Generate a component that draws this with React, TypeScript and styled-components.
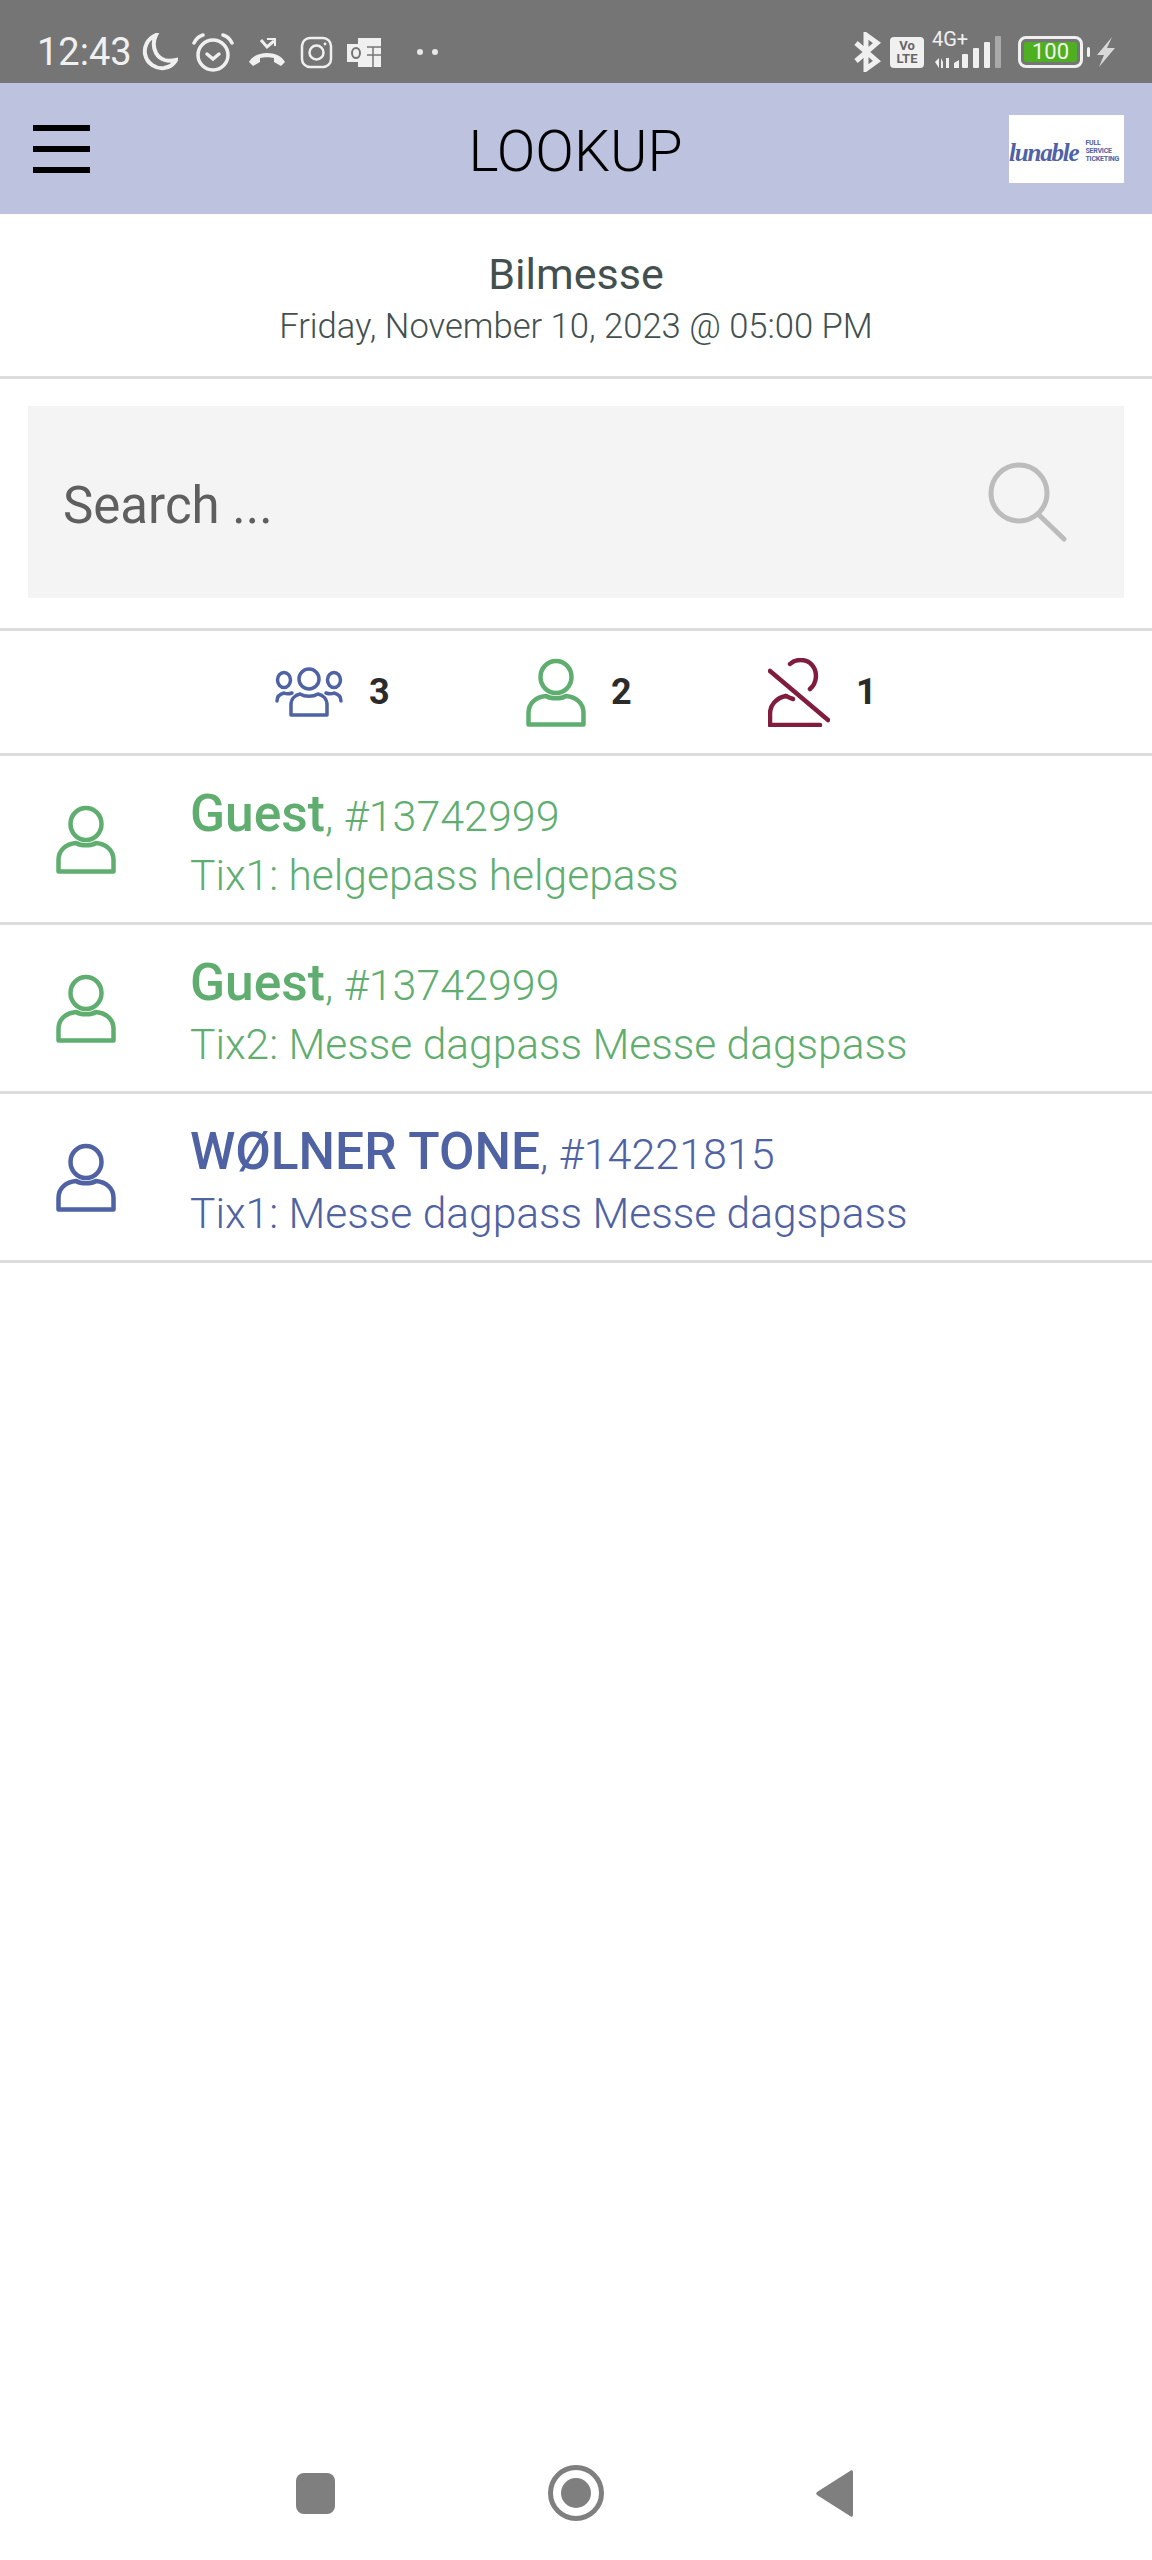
import React from 'react';
import styled, { createGlobalStyle } from 'styled-components';

const green = '#5fae70';
const blue = '#4f62a3';
const wine = '#801c3c';
const line = '#dcdcdc';

const GlobalStyle = createGlobalStyle`
  html, body {
    margin: 0;
    padding: 0;
    background: #fff;
    font-family: Roboto, "Liberation Sans", sans-serif;
  }
`

const Page = styled.div`
  width: 1152px;
  min-height: 2560px;
  display: flex;
  flex-direction: column;
  background: #fff;
`

const StatusBar = styled.div`
  height: 83px;
  box-sizing: border-box;
  padding: 32px 36px 11px 37px;
  background: #757575;
  display: flex;
  justify-content: space-between;
  align-items: center;
  color: #f0f0f0;
`

const StatusGroup = styled.div<{ $gap: number }>`
  display: flex;
  align-items: center;
  gap: ${ ({ $gap }) => $gap }px;
`

const Clock = styled.span`
  font-size: 38px;
  line-height: 40px;
  margin-right: -1px;
`

const Dots = styled.span`
  display: flex;
  gap: 9px;
  margin-left: 22px;

  i {
    width: 6px;
    height: 6px;
    border-radius: 50%;
    background: #e8e8e8;
  }
`

const VoLte = styled.span`
  width: 34px;
  height: 31px;
  border-radius: 4px;
  background: #f0f0f0;
  color: #666;
  font-size: 13px;
  font-weight: 700;
  line-height: 13px;
  display: flex;
  flex-direction: column;
  align-items: center;
  justify-content: center;
`

const Network = styled.div`
  width: 70px;
  height: 36px;
  position: relative;
`

const NetworkLabel = styled.span`
  position: absolute;
  left: -1px;
  top: -5px;
  font-size: 20px;
  line-height: 20px;
`

const Battery = styled.div`
  width: 65px;
  height: 32px;
  box-sizing: border-box;
  border: 3px solid #f0f0f0;
  border-radius: 8px;
  padding: 3px;
  position: relative;
  margin-left: 6px;

  &::after {
    content: '';
    position: absolute;
    right: -10px;
    top: 8px;
    width: 3px;
    height: 10px;
    border-radius: 2px;
    background: #f0f0f0;
  }
`

const BatteryFill = styled.div`
  height: 100%;
  border-radius: 2px;
  background: #4faf22;
  color: #f3f3f3;
  font-size: 22px;
  line-height: 20px;
  text-align: center;
`

const Header = styled.header`
  height: 131px;
  box-sizing: border-box;
  padding: 0 28px 0 33px;
  background: #bdc3de;
  display: flex;
  align-items: center;
  justify-content: space-between;
`

const MenuButton = styled.div`
  width: 57px;
  display: flex;
  flex-direction: column;
  gap: 15px;

  span {
    height: 6px;
    background: #000;
  }
`

const Title = styled.h1`
  margin: 6px 0 0 52px;
  font-size: 57px;
  font-weight: 300;
  color: #000;
  line-height: 64px;
`

const Logo = styled.div`
  width: 115px;
  height: 68px;
  background: #fff;
  display: flex;
  align-items: center;
  gap: 7px;
  overflow: hidden;
  color: ${ blue };
`

const LogoName = styled.span`
  font-family: "Liberation Serif", serif;
  font-style: italic;
  font-weight: 700;
  font-size: 25px;
  line-height: 30px;
  letter-spacing: -1.2px;
  margin-top: 8px;
  flex-shrink: 0;
`

const LogoTag = styled.span`
  font-size: 7px;
  font-weight: 700;
  line-height: 8px;
  margin-top: 4px;
  letter-spacing: -0.2px;
  flex-shrink: 0;
`

const EventInfo = styled.section`
  height: 165px;
  box-sizing: border-box;
  padding-top: 37px;
  border-bottom: 3px solid ${ line };
  text-align: center;
  color: #43504f;
`

const EventName = styled.div`
  font-size: 43px;
  line-height: 46px;
`

const EventDate = styled.div`
  margin-top: 9px;
  font-size: 34.6px;
  font-weight: 300;
  line-height: 40px;
`

const SearchSection = styled.section`
  padding: 27px 28px 30px;
  border-bottom: 3px solid ${ line };
`

const SearchBox = styled.div`
  height: 192px;
  box-sizing: border-box;
  padding: 0 56px 0 35px;
  background: #f4f4f4;
  display: flex;
  align-items: center;
  justify-content: space-between;
`

const Placeholder = styled.span`
  margin-top: 6px;
  font-size: 51px;
  color: #5f5f5f;
`

const Stats = styled.section`
  height: 125px;
  box-sizing: border-box;
  padding-left: 275px;
  border-bottom: 3px solid ${ line };
  display: flex;
  align-items: center;
`

const Stat = styled.div<{ $width: number }>`
  width: ${ ({ $width }) => $width }px;
  display: flex;
  align-items: center;
`

const StatCount = styled.span<{ $gap: number }>`
  margin-left: ${ ({ $gap }) => $gap }px;
  font-size: 36px;
  font-weight: 700;
  color: #2b2b2b;
`

const Row = styled.div<{ $color: string }>`
  height: 169px;
  box-sizing: border-box;
  padding-left: 56px;
  border-bottom: 3px solid ${ line };
  display: flex;
  align-items: center;
  color: ${ ({ $color }) => $color };
`

const RowText = styled.div`
  margin-left: 74px;
  margin-top: 6px;
`

const RowTitle = styled.div`
  font-size: 43px;
  font-weight: 300;
  line-height: 60px;
`

const RowName = styled.span`
  font-size: 51.5px;
  font-weight: 500;
`

const RowTicket = styled.div`
  font-size: 42.5px;
  font-weight: 300;
  line-height: 50px;
  margin-top: 5px;
`

const NavBar = styled.nav`
  margin-top: auto;
  margin-bottom: 39px;
  padding-left: 296px;
  display: flex;
  align-items: center;
`

const NavSquare = styled.div`
  width: 39px;
  height: 41px;
  border-radius: 8px;
  background: #7f7f7f;
`

const NavCircle = styled.div`
  width: 56px;
  height: 56px;
  box-sizing: border-box;
  margin-left: 213px;
  border: 5px solid #7f7f7f;
  border-radius: 50%;
  display: flex;
  align-items: center;
  justify-content: center;

  &::after {
    content: '';
    width: 30px;
    height: 30px;
    border-radius: 50%;
    background: #7f7f7f;
  }
`

const NavBack = styled.svg`
  margin-left: 212px;
`

function PersonIcon ({ color, width, height }: { color: string, width: number, height: number }) {
  return (
    <svg width={ width } height={ height } viewBox="0 0 60 69" fill="none" stroke={ color } strokeWidth="4.5" strokeLinejoin="round">
      <ellipse cx="30" cy="19" rx="15.5" ry="16" />
      <path d="M2.5 66.5V55C2.5 45 10 39 20 38C25 41 35 41 40 38C50 39 57.5 45 57.5 55V66.5Z" />
    </svg>
  )
}

function NoPersonIcon () {
  return (
    <svg width="62" height="69" viewBox="0 0 62 69" fill="none" stroke={ wine } strokeWidth="4.5" strokeLinejoin="round" strokeLinecap="round">
      <path d="M22 6C27 1 38 0 44 7C50 14 49 25 42 31" />
      <path d="M18 38C8 40 2 47 2 56V67H52" />
      <path d="M18 38C20 39 22 40 25 41" />
      <path d="M2 13L60 62" />
    </svg>
  )
}

function GroupIcon () {
  return (
    <svg width="68" height="50" viewBox="0 0 68 50" fill="none" stroke={ blue } strokeWidth="3.5" strokeLinejoin="round" strokeLinecap="round">
      <ellipse cx="34" cy="12" rx="10" ry="10" />
      <ellipse cx="9" cy="13" rx="6.5" ry="7.5" />
      <ellipse cx="59" cy="13" rx="6.5" ry="7.5" />
      <path d="M16 48V38C16 32 20 28 25 27C30 30 38 30 43 27C48 28 52 32 52 38V48Z" />
      <path d="M2 34C2 30 5 27 9 26C11 27 14 27 17 26" />
      <path d="M66 34C66 30 63 27 59 26C57 27 54 27 51 26" />
    </svg>
  )
}

function SearchIcon () {
  return (
    <svg width="80" height="80" viewBox="0 0 80 80" fill="none" stroke="#bcbcbc" strokeWidth="5" strokeLinecap="round">
      <circle cx="31" cy="31" r="28" />
      <path d="M50 52L76 77" />
    </svg>
  )
}

function StatusIcons () {
  return (
    <StatusGroup $gap={ 14 }>
      <svg width="36" height="38" viewBox="0 0 36 38" fill="none" stroke="#f0f0f0" strokeWidth="4">
        <path d="M14 2C5 6 2 14 3 21C5 31 14 36 22 35C28 34 32 31 34 27C26 29 18 27 14 20C11 14 11 8 14 2Z" />
      </svg>
      <svg width="42" height="39" viewBox="0 0 42 39" fill="none" stroke="#f0f0f0" strokeWidth="3.5" strokeLinecap="round">
        <circle cx="21" cy="22" r="15" />
        <path d="M15 21L21 26L27 21" />
        <path d="M2 10C4 6 7 3 11 2" />
        <path d="M40 10C38 6 35 3 31 2" />
      </svg>
      <svg width="38" height="29" viewBox="0 0 38 29" fill="#f0f0f0">
        <path d="M1 24C7 12 31 12 37 24L33 28L26 24V20C22 19 16 19 12 20V24L5 28Z" />
        <path d="M13 2L19 9L26 3" fill="none" stroke="#f0f0f0" strokeWidth="3" />
        <path d="M19 1H27V8" fill="none" stroke="#f0f0f0" strokeWidth="2" />
      </svg>
      <svg width="33" height="33" viewBox="0 0 33 33" fill="none" stroke="#f0f0f0" strokeWidth="2.5">
        <rect x="2" y="2" width="29" height="29" rx="8" />
        <circle cx="16.5" cy="16.5" r="7" />
        <circle cx="25" cy="8" r="1.4" fill="#f0f0f0" stroke="none" />
      </svg>
      <svg width="34" height="29" viewBox="0 0 34 29">
        <path d="M11 0H34V29H11Z" fill="#f0f0f0" />
        <rect x="0" y="6" width="18" height="18" fill="#f0f0f0" />
        <ellipse cx="9" cy="15" rx="4" ry="5" fill="none" stroke="#757575" strokeWidth="2" />
        <path d="M20 9H34M26 9V29M20 17H34" stroke="#757575" strokeWidth="1.5" />
      </svg>
      <Dots><i /><i /></Dots>
    </StatusGroup>
  )
}

function StatusRight () {
  return (
    <StatusGroup $gap={ 9 }>
      <svg width="28" height="40" viewBox="0 0 28 40" fill="none" stroke="#f0f0f0" strokeWidth="5">
        <path d="M3 11L24 29L13 37V3L24 11L3 29" />
      </svg>
      <VoLte><span>Vo</span><span>LTE</span></VoLte>
      <Network>
        <NetworkLabel>4G+</NetworkLabel>
        <svg width="70" height="36" viewBox="0 0 70 36">
          <path d="M2 28L6 24V34ZM8 24V34H10V28Z" fill="#f0f0f0" />
          <path d="M13 24H16V34H13ZM21 29L26 26V34H21Z" fill="#f0f0f0" />
          <rect x="29" y="20" width="6" height="14" rx="1" fill="#f0f0f0" />
          <rect x="40" y="14" width="6" height="20" rx="1" fill="#f0f0f0" />
          <rect x="51" y="8" width="6" height="26" rx="1" fill="#f0f0f0" />
          <rect x="62" y="2" width="6" height="32" rx="1" fill="#a9a9a9" />
        </svg>
      </Network>
      <Battery>
        <BatteryFill>100</BatteryFill>
      </Battery>
      <svg width="21" height="30" viewBox="0 0 21 30" fill="#d8d8d8" style={ { marginLeft: 3 } }>
        <path d="M17 0L2 18H9L4 30L20 11H12Z" />
      </svg>
    </StatusGroup>
  )
}

const rows = [
  { name: 'Guest', number: '#13742999', ticket: 'Tix1: helgepass helgepass', color: green },
  { name: 'Guest', number: '#13742999', ticket: 'Tix2: Messe dagpass Messe dagspass', color: green },
  { name: 'WØLNER TONE', number: '#14221815', ticket: 'Tix1: Messe dagpass Messe dagspass', color: blue },
]

export default function App () {
  return (
    <Page>
      <GlobalStyle />
      <StatusBar>
        <StatusGroup $gap={ 11 }>
          <Clock>12:43</Clock>
          <StatusIcons />
        </StatusGroup>
        <StatusRight />
      </StatusBar>
      <Header>
        <MenuButton><span /><span /><span /></MenuButton>
        <Title>LOOKUP</Title>
        <Logo>
          <LogoName>lunable</LogoName>
          <LogoTag>FULL<br />SERVICE<br />TICKETING</LogoTag>
        </Logo>
      </Header>
      <EventInfo>
        <EventName>Bilmesse</EventName>
        <EventDate>Friday, November 10, 2023 @ 05:00 PM</EventDate>
      </EventInfo>
      <SearchSection>
        <SearchBox>
          <Placeholder>Search ...</Placeholder>
          <SearchIcon />
        </SearchBox>
      </SearchSection>
      <Stats>
        <Stat $width={ 251 }>
          <GroupIcon />
          <StatCount $gap={ 26 }>3</StatCount>
        </Stat>
        <Stat $width={ 242 }>
          <PersonIcon color={ green } width={ 60 } height={ 69 } />
          <StatCount $gap={ 25 }>2</StatCount>
        </Stat>
        <Stat $width={ 120 }>
          <NoPersonIcon />
          <StatCount $gap={ 26 }>1</StatCount>
        </Stat>
      </Stats>
      { rows.map((row, index) => (
        <Row key={ index } $color={ row.color }>
          <PersonIcon color={ row.color } width={ 60 } height={ 69 } />
          <RowText>
            <RowTitle><RowName>{ row.name }</RowName>, { row.number }</RowTitle>
            <RowTicket>{ row.ticket }</RowTicket>
          </RowText>
        </Row>
      )) }
      <NavBar>
        <NavSquare />
        <NavCircle />
        <NavBack width="38" height="47" viewBox="0 0 38 47" fill="#7f7f7f">
          <path d="M37 2V45C37 47 35 47 34 46L1 25C0 24 0 23 1 22L34 1C35 0 37 0 37 2Z" />
        </NavBack>
      </NavBar>
    </Page>
  )
}
